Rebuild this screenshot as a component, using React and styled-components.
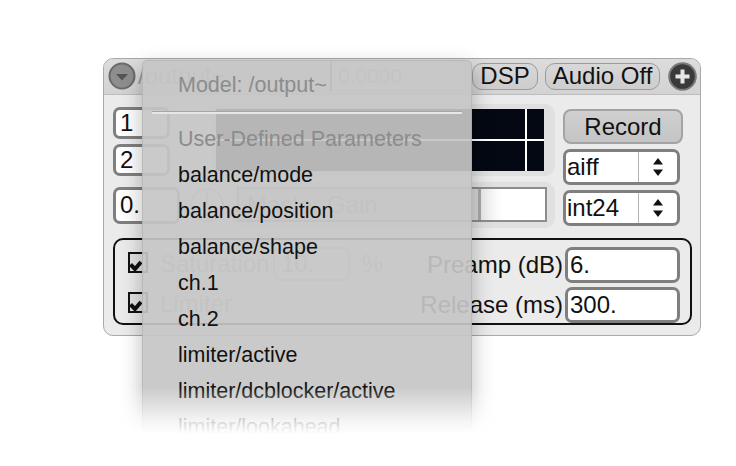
import React from "react";
import styled, { createGlobalStyle } from "styled-components";

const GlobalStyle = createGlobalStyle`
  *, *::before, *::after { box-sizing: border-box; }
  html, body, #root { margin: 0; padding: 0; background: #fff; min-height: 100%; height: 100%; }
  body {
    font-family: "Liberation Sans", Arial, Helvetica, sans-serif;
    color: #111;
  }
`;

const Stage = styled.div`
  min-height: 466px;
  height: 100%;
  padding: 58px 0 0 103px;
`;

const Panel = styled.div`
  position: relative;
  width: 598px;
  height: 278px;
  border: 1px solid #a9a9a9;
  border-radius: 10px;
  background: #ebebeb;
  display: flex;
  flex-direction: column;
`;

const TopBar = styled.div`
  height: 37px;
  display: flex;
  align-items: center;
  padding: 0 3px 1px 4px;
  background: linear-gradient(#dcdcdc, #d3d3d3);
  border-bottom: 1px solid #bdbdbd;
  border-radius: 9px 9px 0 0;
`;

const Title = styled.div`
  flex: 1;
  margin-left: 2px;
  font-size: 24px;
  color: #9a9a9a;
`;

const Field = styled.div`
  width: 135px;
  height: 29px;
  margin-right: 7px;
  padding-left: 6px;
  display: flex;
  align-items: center;
  background: #e4e4e4;
  border: 1px solid #c4c4c4;
  border-left: 2px solid #666;
  font-size: 21px;
  color: #a0a0a0;
`;

const PillButton = styled.div`
  width: ${(p) => p.$w}px;
  height: 27px;
  margin-right: ${(p) => p.$mr}px;
  display: flex;
  align-items: center;
  justify-content: center;
  border: 1px solid #9b9b9b;
  border-radius: 10px;
  background: linear-gradient(#d8d8d8, #cdcdcd);
  font-size: 24px;
`;

const Body = styled.div`
  flex: 1;
  padding: 9px 8px 10px 9px;
  display: flex;
  flex-direction: column;
`;

const TopSection = styled.div`
  display: flex;
  gap: 8px;
`;

const LeftArea = styled.div`
  width: 442px;
  display: flex;
  flex-direction: column;
`;

const RowA = styled.div`
  height: 73px;
  display: flex;
`;

const NumCol = styled.div`
  width: 57px;
  padding-top: 3px;
  display: flex;
  flex-direction: column;
  gap: 5px;
`;

const NumBox = styled.div`
  width: ${(p) => p.$w || 57}px;
  height: ${(p) => p.$h || 32}px;
  padding-left: 4px;
  display: flex;
  align-items: center;
  background: #fff;
  border: 3px solid #7f7f7f;
  border-radius: 7px;
  font-size: 24px;
`;

const InsetPanel = styled.div`
  margin-left: auto;
  width: ${(p) => p.$w}px;
  height: ${(p) => p.$h}px;
  padding: ${(p) => p.$pad};
  background: #e0e0e0;
  border-radius: 10px;
`;

const Meter = styled.div`
  height: 100%;
  display: grid;
  grid-template-columns: 1fr 17px;
  grid-template-rows: 1fr 1fr;
  gap: 2px;
  background: #fff;
`;

const MeterCell = styled.div`
  background: #030812;
`;

const RowB = styled.div`
  margin-top: 5px;
  height: 46px;
  display: flex;
  align-items: center;
`;

const Knob = styled.div`
  position: relative;
  width: 34px;
  height: 34px;
  margin-left: 10px;
  border: 2px solid #b8b8b8;
  border-radius: 50%;
  &::after {
    content: "";
    position: absolute;
    left: 14px;
    top: 0;
    width: 2px;
    height: 15px;
    background: #b8b8b8;
  }
`;

const Slider = styled.div`
  position: relative;
  height: 100%;
  display: flex;
  align-items: center;
  padding-left: 8px;
  border: 2px solid #8c8c8c;
  background: linear-gradient(
    to right,
    #d6d6d6 0,
    #d6d6d6 78%,
    #a8a8a8 78%,
    #a8a8a8 79%,
    #ececec 79%,
    #fff 86%
  );
  font-size: 24px;
  color: #9a9a9a;
`;

const RightCol = styled.div`
  width: 120px;
  padding-top: 5px;
  display: flex;
  flex-direction: column;
  gap: 5px;
`;

const RecordButton = styled.div`
  height: 35px;
  display: flex;
  align-items: center;
  justify-content: center;
  border: 2px solid #a3a3a3;
  border-radius: 8px;
  background: linear-gradient(#d0d0d0, #c4c4c4);
  font-size: 24px;
`;

const Select = styled.div`
  width: 117px;
  height: 36px;
  display: flex;
  background: #fff;
  border: 3px solid #7f7f7f;
  border-radius: 7px;
  font-size: 24px;
`;

const SelectLabel = styled.div`
  flex: 1;
  padding-left: 1px;
  display: flex;
  align-items: center;
`;

const SelectArrows = styled.div`
  width: 39px;
  display: flex;
  align-items: center;
  justify-content: center;
  border-left: 1px solid #b5b5b5;
`;

const GroupBox = styled.div`
  margin-top: 10px;
  height: 87px;
  padding: 7px 10px 0 13px;
  border: 2px solid #111;
  border-radius: 10px;
  display: flex;
  flex-direction: column;
  gap: 4px;
`;

const GroupRow = styled.div`
  height: 36px;
  display: flex;
  align-items: center;
`;

const CheckBox = styled.div`
  width: 20px;
  height: 21px;
  margin-bottom: 6px;
  display: flex;
`;

const CheckLabel = styled.div`
  width: 113px;
  margin-left: 12px;
  margin-bottom: 3px;
  font-size: 24px;
  color: #aaa;
`;

const SmallValue = styled.div`
  width: 77px;
  height: 34px;
  margin-bottom: 3px;
  padding-left: 6px;
  display: flex;
  align-items: center;
  border: 2px solid #c8c8c8;
  border-radius: 7px;
  font-size: 24px;
  color: #aaa;
`;

const Unit = styled.div`
  margin-left: 12px;
  margin-bottom: 3px;
  font-size: 24px;
  color: #aaa;
`;

const ParamLabel = styled.div`
  margin-left: auto;
  margin-right: 2px;
  font-size: 24px;
`;

const ParamBox = styled.div`
  width: 115px;
  height: 36px;
  padding-left: 2px;
  display: flex;
  align-items: center;
  background: #fff;
  border: 3px solid #7f7f7f;
  border-radius: 7px;
  font-size: 24px;
`;

const Menu = styled.div`
  position: absolute;
  z-index: 10;
  left: 38px;
  top: 1px;
  width: 330px;
  height: 390px;
  padding-top: 6px;
  background: rgba(197, 197, 197, 0.92);
  border: 1px solid rgba(0, 0, 0, 0.08);
  border-radius: 5px;
  box-shadow: 0 8px 22px rgba(0, 0, 0, 0.28);
`;

const MenuItem = styled.div`
  height: 36px;
  padding-left: 35px;
  display: flex;
  align-items: center;
  font-size: 21.5px;
  color: ${(p) => (p.$disabled ? "#8c8c8c" : "#111")};
  white-space: nowrap;
`;

const MenuSeparator = styled.div`
  height: 18px;
  margin: 0 9px;
  display: flex;
  flex-direction: column;
  justify-content: center;
  &::before {
    content: "";
    height: 1px;
    background: #a6a6a6;
  }
  &::after {
    content: "";
    height: 2px;
    background: #e6e6e6;
  }
`;

const MenuFade = styled.div`
  position: absolute;
  left: -34px;
  right: -34px;
  bottom: -22px;
  height: 84px;
  background: linear-gradient(rgba(255, 255, 255, 0), rgba(255, 255, 255, 0.8) 40%, #fff 56%);
`;

function DropButton() {
  return (
    <svg width="28" height="28" viewBox="0 0 28 28">
      <circle cx="14" cy="14" r="12.5" fill="#8e8e8e" stroke="#6a6a6a" strokeWidth="2" />
      <path d="M8 12 L20 12 L14 18.5 Z" fill="#555" />
    </svg>
  );
}

function PlusButton() {
  return (
    <svg width="29" height="29" viewBox="0 0 29 29">
      <circle cx="14.5" cy="14.5" r="13.3" fill="#3a3a3a" stroke="#7a7a7a" strokeWidth="2" />
      <path d="M14.5 7.5 V21.5 M7.5 14.5 H21.5" stroke="#e6e6e6" strokeWidth="4" />
    </svg>
  );
}

function Arrows() {
  return (
    <svg width="12" height="22" viewBox="0 0 12 22">
      <path d="M6 2 L11 8.5 H1 Z" fill="#111" />
      <path d="M6 20 L11 13.5 H1 Z" fill="#111" />
    </svg>
  );
}

function Check() {
  return (
    <svg width="20" height="21" viewBox="0 0 20 21">
      <rect x="1" y="1" width="18" height="19" fill="#e4e4e4" stroke="#111" strokeWidth="2" />
      <path d="M2.5 12.5 L7 17 L13 10" fill="none" stroke="#111" strokeWidth="4" />
    </svg>
  );
}

const menuItems = [
  "balance/mode",
  "balance/position",
  "balance/shape",
  "ch.1",
  "ch.2",
  "limiter/active",
  "limiter/dcblocker/active",
  "limiter/lookahead",
];

export default function App() {
  return (
    <>
      <GlobalStyle />
      <Stage>
        <Panel>
          <TopBar>
            <DropButton />
            <Title>/output~</Title>
            <Field>0.0000</Field>
            <PillButton $w={66} $mr={7}>DSP</PillButton>
            <PillButton $w={115} $mr={8}>Audio Off</PillButton>
            <PlusButton />
          </TopBar>

          <Body>
            <TopSection>
              <LeftArea>
                <RowA>
                  <NumCol>
                    <NumBox>1</NumBox>
                    <NumBox>2</NumBox>
                  </NumCol>
                  <InsetPanel $w={343} $h={72} $pad="5px 11px 5px 4px">
                    <Meter>
                      <MeterCell />
                      <MeterCell />
                      <MeterCell />
                      <MeterCell />
                    </Meter>
                  </InsetPanel>
                </RowA>
                <RowB>
                  <NumBox $w={67} $h={37}>0.</NumBox>
                  <Knob />
                  <InsetPanel $w={322} $h={46} $pad="5px 8px 6px 4px">
                    <Slider>Master Gain</Slider>
                  </InsetPanel>
                </RowB>
              </LeftArea>

              <RightCol>
                <RecordButton>Record</RecordButton>
                <Select>
                  <SelectLabel>aiff</SelectLabel>
                  <SelectArrows>
                    <Arrows />
                  </SelectArrows>
                </Select>
                <Select>
                  <SelectLabel>int24</SelectLabel>
                  <SelectArrows>
                    <Arrows />
                  </SelectArrows>
                </Select>
              </RightCol>
            </TopSection>

            <GroupBox>
              <GroupRow>
                <CheckBox>
                  <Check />
                </CheckBox>
                <CheckLabel>Saturation</CheckLabel>
                <SmallValue>10.</SmallValue>
                <Unit>%</Unit>
                <ParamLabel>Preamp (dB)</ParamLabel>
                <ParamBox>6.</ParamBox>
              </GroupRow>
              <GroupRow>
                <CheckBox>
                  <Check />
                </CheckBox>
                <CheckLabel>Limiter</CheckLabel>
                <ParamLabel>Release (ms)</ParamLabel>
                <ParamBox>300.</ParamBox>
              </GroupRow>
            </GroupBox>
          </Body>

          <Menu>
            <MenuItem $disabled>Model: /output~</MenuItem>
            <MenuSeparator />
            <MenuItem $disabled>User-Defined Parameters</MenuItem>
            {menuItems.map((item) => (
              <MenuItem key={item}>{item}</MenuItem>
            ))}
            <MenuFade />
          </Menu>
        </Panel>
      </Stage>
    </>
  );
}
